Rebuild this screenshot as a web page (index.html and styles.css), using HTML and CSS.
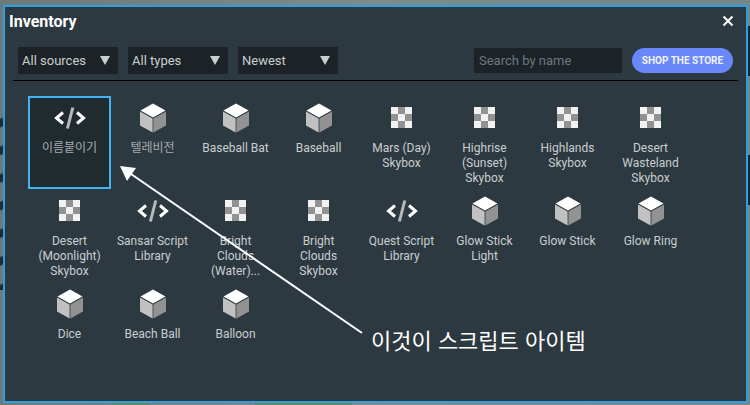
FILE: index.html
```
<!DOCTYPE html>
<html lang="en">
	<head>
		<meta charset="utf-8">
		<title>Inventory</title>
		<link rel="stylesheet" href="styles.css">
	</head>
	<body>

		<svg class="defs" aria-hidden="true">
			<symbol id="cube" viewBox="0 0 28 30">
				<path d="M14 0.5 L26.5 7.6 L14 14.5 L1.5 7.6 Z" fill="#fff" />
				<path d="M1 8.5 L13.6 15.4 V29.5 L1 22.5 Z" fill="#c1c1c1" />
				<path d="M27 8.5 L14.4 15.4 V29.5 L27 22.5 Z" fill="#929292" />
			</symbol>
			<symbol id="code" viewBox="0 0 32 30">
				<path d="M9 9.5 L2.5 15 L9 20.5 M23 9.5 L29.5 15 L23 20.5" fill="none" stroke="#fff" stroke-width="3" />
				<path d="M18.8 4.5 L13.4 25.5" fill="none" stroke="#b9b9b9" stroke-width="3" />
			</symbol>
			<symbol id="sky" viewBox="0 0 21 21">
				<path d="M0 0h21v21H0z" fill="#f2f2f2" />
				<path d="M7 0h7v7H7zM0 7h7v7H0zM14 7h7v7h-7zM7 14h7v7H7z" fill="#929292" />
			</symbol>
		</svg>

		<main class="window">
			<header class="titlebar">
				<h1>Inventory</h1>
				<button class="close" aria-label="Close">
					<svg viewBox="0 0 12 12"><path d="M1.5 1.5 L10.5 10.5 M10.5 1.5 L1.5 10.5" /></svg>
				</button>
			</header>

			<div class="toolbar">
				<div class="filter">
					<select aria-label="Source"><option>All sources</option></select>
					<span class="caret"></span>
				</div>
				<div class="filter">
					<select aria-label="Type"><option>All types</option></select>
					<span class="caret"></span>
				</div>
				<div class="filter">
					<select aria-label="Sort order"><option>Newest</option></select>
					<span class="caret"></span>
				</div>
				<input class="search" type="text" placeholder="Search by name" aria-label="Search by name">
				<button class="shop">SHOP THE STORE</button>
			</div>

			<div class="items">
				<button class="item selected"><svg class="code"><use href="#code" /></svg><span lang="ko">이름붙이기</span></button>
				<button class="item"><svg class="cube"><use href="#cube" /></svg><span lang="ko">텔레비전</span></button>
				<button class="item"><svg class="cube"><use href="#cube" /></svg><span>Baseball Bat</span></button>
				<button class="item"><svg class="cube"><use href="#cube" /></svg><span>Baseball</span></button>
				<button class="item"><svg class="sky"><use href="#sky" /></svg><span>Mars (Day) Skybox</span></button>
				<button class="item"><svg class="sky"><use href="#sky" /></svg><span>Highrise (Sunset) Skybox</span></button>
				<button class="item"><svg class="sky"><use href="#sky" /></svg><span>Highlands Skybox</span></button>
				<button class="item"><svg class="sky"><use href="#sky" /></svg><span>Desert Wasteland Skybox</span></button>
				<button class="item"><svg class="sky"><use href="#sky" /></svg><span>Desert (Moonlight) Skybox</span></button>
				<button class="item"><svg class="code"><use href="#code" /></svg><span>Sansar Script Library</span></button>
				<button class="item"><svg class="sky"><use href="#sky" /></svg><span>Bright<br>Clouds (Water)...</span></button>
				<button class="item"><svg class="sky"><use href="#sky" /></svg><span>Bright<br>Clouds Skybox</span></button>
				<button class="item"><svg class="code"><use href="#code" /></svg><span>Quest Script Library</span></button>
				<button class="item"><svg class="cube"><use href="#cube" /></svg><span>Glow Stick Light</span></button>
				<button class="item"><svg class="cube"><use href="#cube" /></svg><span>Glow Stick</span></button>
				<button class="item"><svg class="cube"><use href="#cube" /></svg><span>Glow Ring</span></button>
				<button class="item"><svg class="cube"><use href="#cube" /></svg><span>Dice</span></button>
				<button class="item"><svg class="cube"><use href="#cube" /></svg><span>Beach Ball</span></button>
				<button class="item"><svg class="cube"><use href="#cube" /></svg><span>Balloon</span></button>

				<!-- callout pointing at the selected item -->
				<svg class="arrow" viewBox="0 0 244 170" aria-hidden="true">
					<path d="M12 9 L243 168" stroke="#fff" stroke-width="2" />
					<path d="M1 1 L17 3 L8 16 Z" fill="#fff" />
				</svg>
				<p class="note" lang="ko">이것이 스크립트 아이템</p>
			</div>
		</main>

	</body>
</html>
```
FILE: styles.css
```
* { box-sizing:border-box; }

body {
	margin:0;
	min-height:100vh;
	padding:5px 2px 2px 3px;
	display:flex;
	/* scenery showing round the edges of the window */
	background:
		linear-gradient(#14283a, #14283a) right 26px / 2px 50px no-repeat,
		linear-gradient(#14283a, #14283a) right 155px / 2px 50px no-repeat,
		repeating-linear-gradient(160deg, transparent 0 12px, #1d2c30 14px 20px, transparent 22px 26px) left 105px / 3px 185px no-repeat,
		linear-gradient(90deg, transparent 15%, #5f8861 15% 20%, transparent 20% 34%, #5f8861 34% 47%, transparent 47%) left bottom / 100% 2px no-repeat,
		linear-gradient(90deg, #6c7b7a, #7b8c8b 50%, #70878c);
	font-family:Roboto, "Noto Sans CJK KR", sans-serif;
	color:#c9ced0;
}

button, input, select {
	font:inherit;
	color:inherit;
	border:0;
	margin:0;
	padding:0;
	background:none;
}

.defs { position:absolute; width:0; height:0; }

.window {
	flex:1;
	border:2px solid #2f9fe0;
	background:#2d3940;
}

.titlebar {
	display:flex;
	align-items:center;
	justify-content:space-between;
	height:28px;
	padding:0 12px 0 4px;
}
.titlebar h1 { margin:0; font-size:16px; font-weight:bold; color:#fff; }
.close { width:12px; height:12px; }
.close svg { display:block; width:12px; height:12px; }
.close path { stroke:#fff; stroke-width:2; }

.toolbar {
	display:flex;
	align-items:center;
	gap:10px;
	margin:0 8px;
	padding:12px 5px 6px;
	border-bottom:1px solid #000;
	font-size:13px;
}

.filter { position:relative; width:100px; height:27px; }
.filter select {
	appearance:none;
	width:100%;
	height:100%;
	padding:0 4px;
	background:#1c2226;
}
.caret {
	position:absolute;
	right:8px;
	top:9px;
	border:5px solid transparent;
	border-top:9px solid #c9ced0;
	border-bottom:0;
	pointer-events:none;
}

.search {
	width:148px;
	height:25px;
	margin-left:auto;
	padding:0 5px;
	background:#1c2226;
}
.search::placeholder { color:#6c7883; opacity:1; }

.shop {
	width:101px;
	height:25px;
	border-radius:13px;
	background:#6888fa;
	color:#f0f3ff;
	font-size:10px;
	font-weight:bold;
}

.items {
	position:relative;
	display:grid;
	grid-template-columns:repeat(auto-fill, 83px);
	grid-auto-rows:93px;
	padding:15px 8px 0 23px;
}

.item {
	display:flex;
	flex-direction:column;
	align-items:center;
	padding:5px 2px 0;
	border:2px solid transparent;
	font-size:12px;
	line-height:15px;
}
.item.selected { border-color:#41b4f5; background:#202b30; }
.item [lang=ko] { color:#a4abaf; }

.cube { width:28px; height:30px; margin-bottom:8px; }
.code { width:32px; height:30px; margin-bottom:8px; }
.sky { width:21px; height:21px; margin:4px 0 13px; }

.arrow { position:absolute; left:114px; top:84px; width:244px; height:170px; }
.note {
	position:absolute;
	left:366px;
	top:242px;
	margin:0;
	font-family:"Noto Sans CJK KR", sans-serif;
	font-size:22px;
	line-height:32px;
	color:#fff;
}
```
